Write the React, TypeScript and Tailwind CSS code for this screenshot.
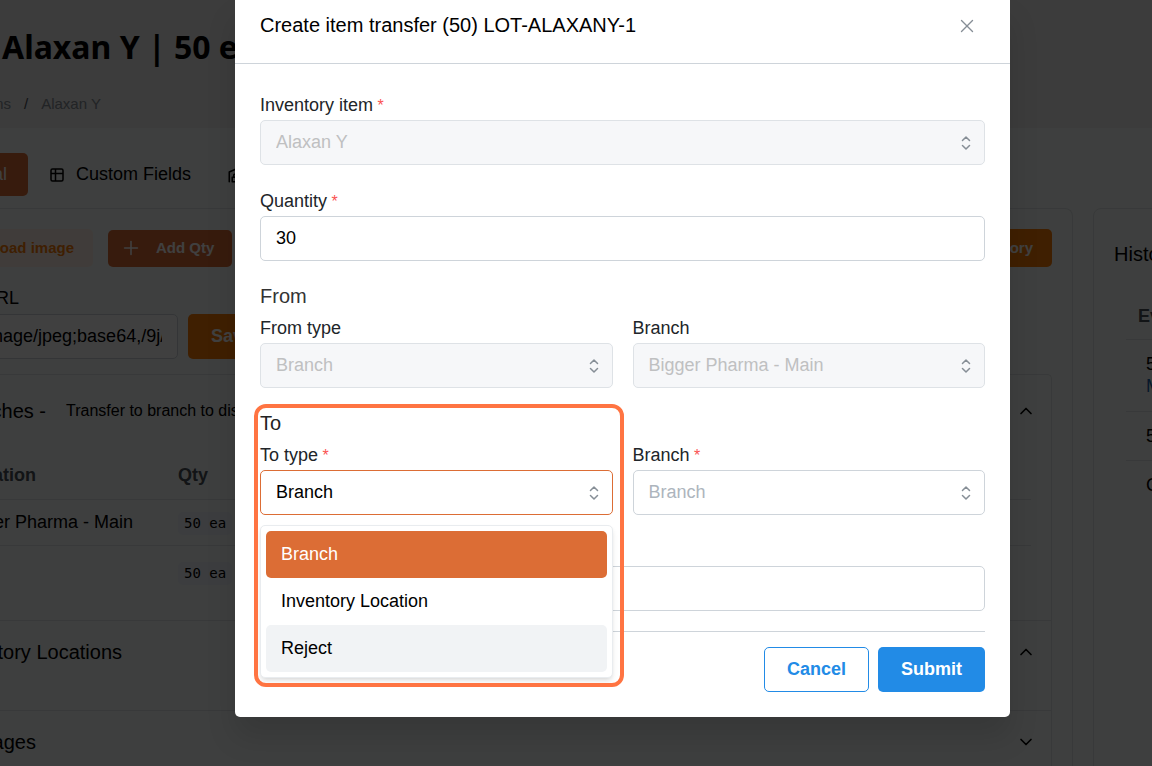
import { ReactNode } from "react";
import { ChevronDown, ChevronUp, Plus, X } from "lucide-react";

function SelectorIcon() {
  return (
    <svg
      viewBox="0 0 24 24"
      className="pointer-events-none absolute right-2.5 top-1/2 size-[18px] -translate-y-1/2"
      fill="none"
      stroke="#868e96"
      strokeWidth="2"
      strokeLinecap="round"
      strokeLinejoin="round"
      aria-hidden="true"
    >
      <path d="M7.3 8.6 12 4 16.7 8.6M7.3 15.4 12 20 16.7 15.4" />
    </svg>
  );
}

function TableIcon() {
  return (
    <svg viewBox="0 0 24 24" className="size-[18px]" fill="none" stroke="currentColor" strokeWidth="2" aria-hidden="true">
      <rect x="4" y="4" width="16" height="16" rx="2" />
      <path d="M4 10h16M10 4v16" />
    </svg>
  );
}

function WarehouseIcon() {
  return (
    <svg
      viewBox="0 0 24 24"
      className="size-[18px]"
      fill="none"
      stroke="currentColor"
      strokeWidth="2"
      strokeLinecap="round"
      strokeLinejoin="round"
      aria-hidden="true"
    >
      <path d="M3 21V8l9-4 9 4v13M13 13h4v8H7v-6h6M13 21v-9a1 1 0 0 0-1-1h-2a1 1 0 0 0-1 1v3" />
    </svg>
  );
}

type FieldProps = {
  id: string;
  label: string;
  required?: boolean;
  children: ReactNode;
};

function Field({ id, label, required, children }: FieldProps) {
  return (
    <div className="min-w-0 flex-1">
      <label htmlFor={id} className="block h-[27px] text-[18px] leading-[24px] text-[#212529]">
        {label}
        {required && <span className="text-[16px] text-[#fa5252]"> *</span>}
      </label>
      <div className="relative">{children}</div>
    </div>
  );
}

type SelectProps = { id: string; value: string; state: "disabled" | "active" | "empty" };

function SelectBox({ id, value, state }: SelectProps) {
  const look = {
    disabled: "border-[#dee2e6] bg-[#f6f7f9] text-[#bfc0c1]",
    active: "border-[#dc6d35] bg-white text-black",
    empty: "border-[#ced4da] bg-white text-[#adb5bd]",
  }[state];
  return (
    <>
      <select
        id={id}
        defaultValue={value}
        disabled={state === "disabled"}
        className={`block h-[45px] w-full appearance-none rounded-[5px] border px-[15px] text-[18px] outline-none disabled:opacity-100 ${look}`}
      >
        <option value={value}>{value}</option>
      </select>
      <SelectorIcon />
    </>
  );
}

function TransferDialog() {
  return (
    <section
      role="dialog"
      aria-modal="true"
      aria-labelledby="dialog-title"
      className="flex-1 rounded-b-[5px] bg-white shadow-[0_20px_30px_rgba(0,0,0,0.12)]"
    >
      <header className="flex h-16 items-start justify-between border-b border-[#ced4da] px-[25px] pt-2.5">
        <h2 id="dialog-title" className="text-[20px] leading-[30px] text-black">
          Create item transfer (50) LOT-ALAXANY-1
        </h2>
        <button type="button" aria-label="Close" className="mt-[5px] mr-[7px] text-[#868e96]">
          <X size={22} strokeWidth={1.5} />
        </button>
      </header>
      <form className="px-[25px] pt-[29px] pb-[25px]" onSubmit={(e) => e.preventDefault()}>
        <div className="flex flex-col gap-6">
          <Field id="item" label="Inventory item" required>
            <SelectBox id="item" value="Alaxan Y" state="disabled" />
          </Field>
          <Field id="quantity" label="Quantity" required>
            <input
              id="quantity"
              defaultValue="30"
              className="block h-[45px] w-full rounded-[5px] border border-[#ced4da] px-[15px] text-[18px] text-black outline-none"
            />
          </Field>
        </div>

        <h3 className="mt-5 text-[20px] leading-[30px] text-[#333]">From</h3>
        <div className="mt-[5px] flex gap-5">
          <Field id="from-type" label="From type">
            <SelectBox id="from-type" value="Branch" state="disabled" />
          </Field>
          <Field id="from-branch" label="Branch">
            <SelectBox id="from-branch" value="Bigger Pharma - Main" state="disabled" />
          </Field>
        </div>

        <h3 className="mt-5 text-[20px] leading-[30px] text-[#222]">To</h3>
        <div className="mt-[5px] flex gap-5">
          <Field id="to-type" label="To type" required>
            <SelectBox id="to-type" value="Branch" state="active" />
            <ul
              role="listbox"
              aria-label="To type"
              className="absolute inset-x-0 top-[55px] z-10 rounded-[5px] border border-[#e9ecef] bg-white p-[5px] text-[18px] leading-[46px] text-black shadow-md"
            >
              <li role="option" aria-selected="true" className="h-[47px] rounded-[5px] bg-[#dc6d35] px-[15px] text-white">
                Branch
              </li>
              <li role="option" aria-selected="false" className="h-[47px] rounded-[5px] px-[15px]">
                Inventory Location
              </li>
              <li role="option" aria-selected="false" className="h-[47px] rounded-[5px] bg-[#f1f3f5] px-[15px]">
                Reject
              </li>
            </ul>
            <div className="pointer-events-none absolute -top-[66px] -right-[11px] -left-1.5 z-20 h-[283px] rounded-[12px] border-4 border-[#ff7442]" />
          </Field>
          <Field id="to-branch" label="Branch" required>
            <SelectBox id="to-branch" value="Branch" state="empty" />
          </Field>
        </div>

        <input
          aria-label="Note"
          className="mt-[51px] block h-[45px] w-full rounded-[5px] border border-[#ced4da] px-[15px] text-[18px] outline-none"
        />

        <div className="mt-5 flex justify-end gap-[9px] border-t border-[#ced4da] pt-[15px]">
          <button
            type="button"
            className="h-[45px] rounded-[5px] border border-[#228be6] px-[22px] text-[18px] font-bold text-[#228be6]"
          >
            Cancel
          </button>
          <button type="submit" className="h-[45px] rounded-[5px] bg-[#228be6] px-[23px] text-[18px] font-bold text-white">
            Submit
          </button>
        </div>
      </form>
    </section>
  );
}

function Quantity() {
  return (
    <code className="inline-block rounded-[5px] bg-[#edf2fa] px-1.5 font-['DejaVu_Sans_Mono',monospace] text-[14px] leading-[23px]">
      50 ea
    </code>
  );
}

function StockTable() {
  return (
    <table className="mt-1.5 w-full text-left text-[18px]">
      <thead>
        <tr className="h-[46px] border-b border-[#dee2e6] text-[#495057]">
          <th className="w-[250px] pl-[33px]">Location</th>
          <th>Qty</th>
        </tr>
      </thead>
      <tbody>
        <tr className="h-[46px] border-b border-[#dee2e6]">
          <td className="w-[250px] pl-[30px]">Bigger Pharma - Main</td>
          <td>
            <Quantity />
          </td>
        </tr>
        <tr className="h-[55px]">
          <td />
          <td>
            <Quantity />
          </td>
        </tr>
      </tbody>
    </table>
  );
}

function StockPanel() {
  return (
    <section className="min-w-0 flex-1 rounded-tr-[8px] border-t border-r border-[#dee2e6] pr-5">
      <div className="flex items-center pt-5 text-[15px] font-bold">
        <button type="button" className="h-[38px] w-[165px] rounded-[5px] bg-[#fff0e6] pr-[19px] text-right text-[#f97b06]">
          Upload image
        </button>
        <button type="button" className="ml-[15px] flex h-[37px] w-[124px] items-center gap-3.5 rounded-[5px] bg-[#dc6d35] pl-3 text-white">
          <Plus size={22} strokeWidth={1.7} />
          Add Qty
        </button>
        <button type="button" className="ml-auto h-[38px] rounded-[5px] bg-[#f97b06] px-[19px] text-white">
          Inventory
        </button>
      </div>
      <label htmlFor="image-url" className="mt-[18px] block w-[88px] text-right text-[18px] leading-[27px] whitespace-nowrap">
        Image URL
      </label>
      <div className="mt-0.5 flex gap-2.5">
        <input
          id="image-url"
          defaultValue="data:image/jpeg;base64,/9j/4AAQSkZJRg"
          className="h-[45px] w-[250px] rounded-[5px] border border-[#ced4da] bg-white px-[15px] text-[18px]"
        />
        <button type="button" className="h-[45px] rounded-[5px] bg-[#f97b06] px-[23px] text-[18px] font-bold text-white">
          Save
        </button>
      </div>

      <div className="mt-[15px] rounded-tr-[5px] border-t border-r border-[#dee2e6] text-[20px]">
        <div className="h-[246px] border-b border-[#dee2e6] pr-5">
          <div className="flex h-[72px] items-center">
            <h3 className="w-[118px] text-right">Branches -</h3>
            <p className="ml-5 text-[16px]">Transfer to branch to dispense</p>
            <ChevronUp size={20} className="mr-[-5px] ml-auto" />
          </div>
          <StockTable />
        </div>
        <div className="h-[90px] border-b border-[#dee2e6] pr-[15px]">
          <div className="flex h-[62px] items-center">
            <h3 className="w-[194px] text-right">Inventory Locations</h3>
            <ChevronUp size={20} className="ml-auto" />
          </div>
        </div>
        <div className="h-[90px] pr-[15px]">
          <div className="flex h-[62px] items-center">
            <h3 className="w-[108px] text-right">Packages</h3>
            <ChevronDown size={20} className="ml-auto" />
          </div>
        </div>
      </div>
    </section>
  );
}

function HistoryPanel() {
  return (
    <section className="-mr-[181px] w-[240px] shrink-0 rounded-t-[8px] border border-[#dee2e6] px-5 pt-[30px] text-[18px]">
      <h3 className="text-[20px] leading-[30px]">History</h3>
      <table className="mt-[22px] ml-3 w-full text-left">
        <thead>
          <tr className="h-[48px] border-b border-[#dee2e6] text-[#495057]">
            <th className="pt-1 pl-3">Event</th>
          </tr>
        </thead>
        <tbody className="leading-[22px]">
          <tr className="h-[72px] border-b border-[#dee2e6]">
            <td className="pl-5">
              5<br />
              <a href="#main" className="text-[#1864ab]">
                M
              </a>
            </td>
          </tr>
          <tr className="h-[49px] border-b border-[#dee2e6]">
            <td className="pl-5">5</td>
          </tr>
          <tr className="h-[49px]">
            <td className="pl-5">C</td>
          </tr>
        </tbody>
      </table>
    </section>
  );
}

function ItemPage() {
  return (
    <div className="min-h-screen bg-[#f6fcf9] text-black">
      <header className="h-32 bg-[#ededed] pt-[22px]">
        <h1 className="pl-0.5 font-['Noto_Sans',sans-serif] text-[32px] leading-[50px] font-bold whitespace-nowrap">
          Alaxan Y | 50 ea
        </h1>
        <nav aria-label="Breadcrumb" className="mt-5 -ml-[72px] flex text-[15px] leading-6 text-[#868e96]">
          <a href="#items" className="w-[83px] text-right">
            Items
          </a>
          <span className="mx-[13px] text-[#495057]">/</span>
          <a href="#item">Alaxan Y</a>
        </nav>
      </header>
      <nav aria-label="Sections" className="-ml-[72px] flex h-20 items-start pt-[25px] text-[18px]">
        <button type="button" className="h-[43px] w-[100px] rounded-[5px] bg-[#dc6d35] pr-[21px] text-right text-white">
          General
        </button>
        <button type="button" className="ml-5 flex h-[43px] items-center gap-2.5">
          <TableIcon />
          Custom Fields
        </button>
        <button type="button" className="ml-9 flex h-[43px] items-center gap-2.5">
          <WarehouseIcon />
          Inventory
        </button>
      </nav>
      <main className="-ml-[72px] flex gap-5">
        <StockPanel />
        <HistoryPanel />
      </main>
    </div>
  );
}

export default function App() {
  return (
    <div className="relative h-screen overflow-hidden font-['Liberation_Sans',Arial,sans-serif]">
      <ItemPage />
      <div className="absolute inset-0 flex items-start bg-black/75 pr-[142px] pl-[235px]">
        <TransferDialog />
      </div>
    </div>
  );
}
